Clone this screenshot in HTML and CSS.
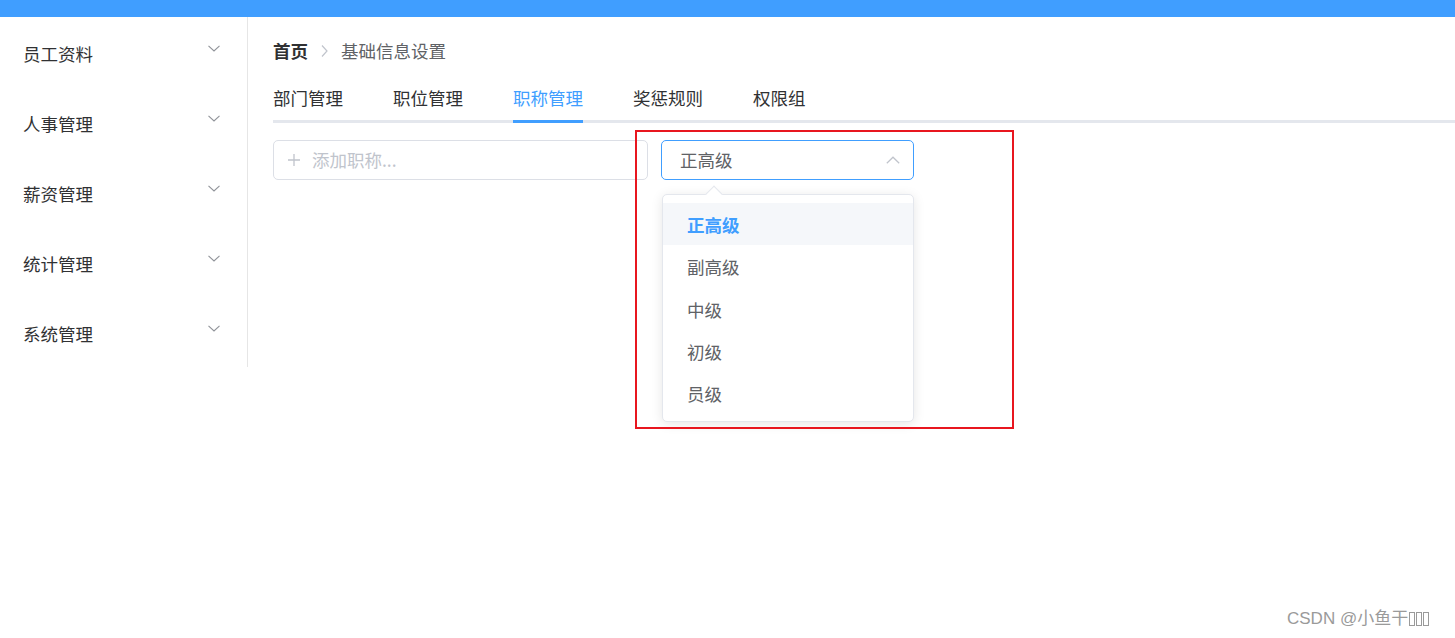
FILE: index.html
```html
<!DOCTYPE html>
<html lang="zh-CN">
<head>
<meta charset="utf-8">
<title>职称管理</title>
<link rel="stylesheet" href="styles.css">
</head>
<body>
<div class="topbar"></div>
<div class="layout">
  <aside class="sidebar">
    <div class="menu-item"><span>员工资料</span><svg class="chev" viewBox="0 0 12 7" width="12" height="7"><path d="M0.5 0.8 L6 6 L11.5 0.8" fill="none" stroke="#909399" stroke-width="1.1"/></svg></div>
    <div class="menu-item"><span>人事管理</span><svg class="chev" viewBox="0 0 12 7" width="12" height="7"><path d="M0.5 0.8 L6 6 L11.5 0.8" fill="none" stroke="#909399" stroke-width="1.1"/></svg></div>
    <div class="menu-item"><span>薪资管理</span><svg class="chev" viewBox="0 0 12 7" width="12" height="7"><path d="M0.5 0.8 L6 6 L11.5 0.8" fill="none" stroke="#909399" stroke-width="1.1"/></svg></div>
    <div class="menu-item"><span>统计管理</span><svg class="chev" viewBox="0 0 12 7" width="12" height="7"><path d="M0.5 0.8 L6 6 L11.5 0.8" fill="none" stroke="#909399" stroke-width="1.1"/></svg></div>
    <div class="menu-item"><span>系统管理</span><svg class="chev" viewBox="0 0 12 7" width="12" height="7"><path d="M0.5 0.8 L6 6 L11.5 0.8" fill="none" stroke="#909399" stroke-width="1.1"/></svg></div>
  </aside>
  <main class="main">
    <div class="breadcrumb">
      <span class="crumb-home">首页</span>
      <svg class="crumb-sep" viewBox="0 0 10 14" width="10" height="14"><path d="M3 1.5 L8 7 L3 12.5" fill="none" stroke="#C0C4CC" stroke-width="1.2"/></svg>
      <span class="crumb-current">基础信息设置</span>
    </div>
    <div class="tabs">
      <div class="tab">部门管理</div>
      <div class="tab">职位管理</div>
      <div class="tab active">职称管理</div>
      <div class="tab">奖惩规则</div>
      <div class="tab">权限组</div>
    </div>
    <div class="controls">
      <div class="input">
        <svg class="plus" viewBox="0 0 12 12" width="12" height="12"><path d="M6 0 V12 M0 6 H12" stroke="#C0C4CC" stroke-width="1.3"/></svg>
        <span class="placeholder">添加职称...</span>
      </div>
      <div class="select">
        <span class="select-value">正高级</span>
        <svg class="select-arrow" viewBox="0 0 14 8" width="14" height="8"><path d="M0.8 7.2 L7 1.2 L13.2 7.2" fill="none" stroke="#C0C4CC" stroke-width="1.2"/></svg>
        <div class="dropdown">
          <div class="dd-arrow"></div>
          <div class="dd-item selected">正高级</div>
          <div class="dd-item">副高级</div>
          <div class="dd-item">中级</div>
          <div class="dd-item">初级</div>
          <div class="dd-item">员级</div>
        </div>
      </div>
    </div>
  </main>
</div>
<div class="annotation"></div>
<div class="watermark">CSDN @小鱼干<span class="tofu"></span><span class="tofu"></span><span class="tofu"></span></div>
</body>
</html>
```
FILE: styles.css
```css
html, body {
  margin: 0;
  padding: 0;
  background: #ffffff;
}
body {
  font-family: "Noto Sans CJK SC", "Microsoft YaHei", sans-serif;
  font-size: 17.5px;
  color: #303133;
  position: relative;
  width: 1455px;
  height: 638px;
  overflow: hidden;
}
.topbar {
  height: 17px;
  background: #409EFF;
}
.layout {
  display: flex;
  align-items: flex-start;
}
.sidebar {
  width: 247px;
  border-right: 1px solid #e6e6e6;
}
.menu-item {
  height: 70px;
  display: flex;
  align-items: center;
  justify-content: space-between;
  padding: 2px 27px 0 23px;
  box-sizing: border-box;
  color: #303133;
}
.menu-item .chev {
  display: block;
  margin-bottom: 9px;
}
.main {
  flex: 1;
  padding: 22px 0 0 25px;
}
.breadcrumb {
  display: flex;
  align-items: center;
  height: 24px;
  line-height: 24px;
}
.crumb-home {
  font-weight: 700;
  color: #303133;
}
.crumb-sep {
  display: block;
  margin: 0 12px 0 11px;
}
.crumb-current {
  color: #606266;
}
.tabs {
  margin-top: 10px;
  display: flex;
  height: 50px;
  box-shadow: inset 0 -3px 0 #E4E7ED;
}
.tab {
  height: 50px;
  line-height: 50px;
  padding: 0 25px;
  color: #303133;
  box-sizing: border-box;
}
.tab:first-child {
  padding-left: 0;
}
.tab:last-child {
  padding-right: 0;
}
.tab.active {
  color: #409EFF;
  position: relative;
}
.tab.active::after {
  content: "";
  position: absolute;
  left: 25px;
  right: 25px;
  bottom: 0;
  height: 3px;
  background: #409EFF;
}
.controls {
  margin-top: 17px;
  display: flex;
  gap: 13px;
}
.input {
  width: 375px;
  height: 40px;
  border: 1px solid #DCDFE6;
  border-radius: 5px;
  box-sizing: border-box;
  display: flex;
  align-items: center;
  padding: 0 0 2px 14px;
}
.plus {
  display: block;
  margin: 2px 12px 0 0;
}
.placeholder {
  color: #C0C4CC;
}
.select {
  position: relative;
  width: 253px;
  height: 40px;
  border: 1px solid #409EFF;
  border-radius: 5px;
  box-sizing: border-box;
  display: flex;
  align-items: center;
  justify-content: space-between;
  padding: 0 13px 2px 18px;
}
.select-value {
  color: #606266;
}
.select-arrow {
  display: block;
  margin-top: 2px;
}
.dropdown {
  position: absolute;
  top: 53px;
  left: 0;
  width: 252px;
  box-sizing: border-box;
  background: #fff;
  border: 1px solid #E4E7ED;
  border-radius: 5px;
  box-shadow: 0 2px 12px rgba(0, 0, 0, 0.1);
  padding: 8px 0 7px;
}
.dd-arrow {
  position: absolute;
  top: -7px;
  left: 45px;
  width: 11px;
  height: 11px;
  background: #fff;
  border-left: 1px solid #E4E7ED;
  border-top: 1px solid #E4E7ED;
  transform: rotate(45deg);
}
.dd-item {
  position: relative;
  height: 42.25px;
  line-height: 43px;
  padding: 0 24px;
  color: #606266;
}
.dd-item.selected {
  color: #409EFF;
  font-weight: 700;
  background: #F5F7FA;
}
.annotation {
  position: absolute;
  left: 635px;
  top: 130px;
  width: 379px;
  height: 299px;
  border: 2px solid #E8161F;
  box-sizing: border-box;
  pointer-events: none;
}
.watermark {
  position: absolute;
  left: 1287px;
  top: 607px;
  font-family: "Liberation Sans", "Noto Sans CJK SC", sans-serif;
  font-size: 17px;
  line-height: 24px;
  color: #9a9a9a;
  display: flex;
  align-items: center;
}
.tofu {
  display: inline-block;
  width: 4px;
  height: 12px;
  border: 1px solid #9a9a9a;
  margin-left: 1px;
}
```
